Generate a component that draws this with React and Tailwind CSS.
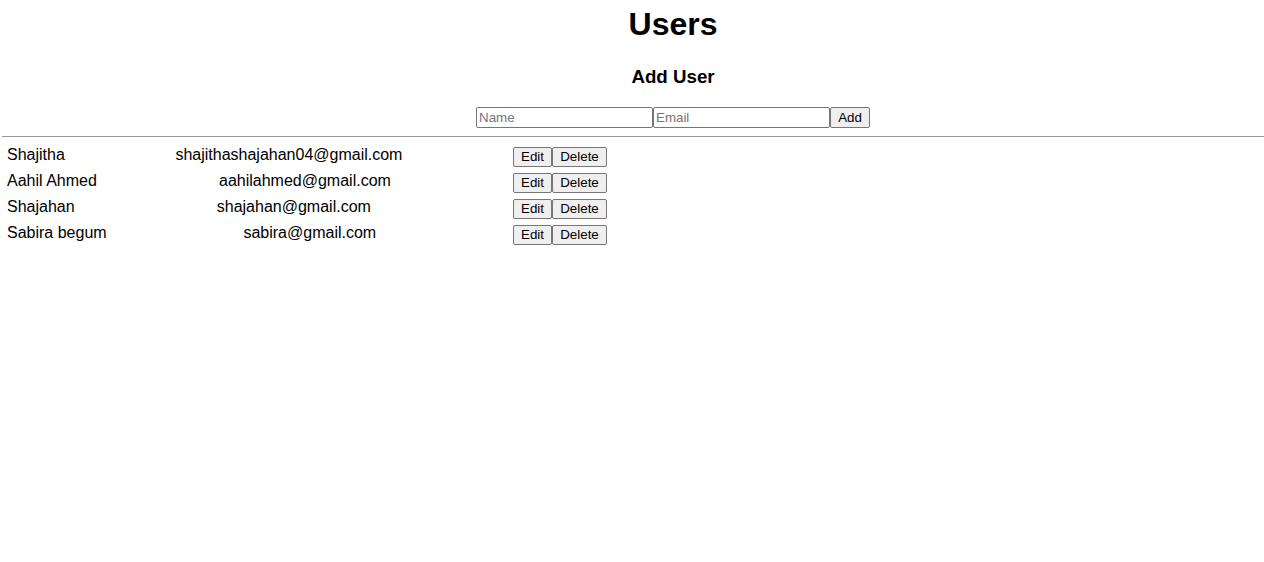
const users = [
  { name: "Shajitha", email: "shajithashajahan04@gmail.com" },
  { name: "Aahil Ahmed", email: "aahilahmed@gmail.com" },
  { name: "Shajahan", email: "shajahan@gmail.com" },
  { name: "Sabira begum", email: "sabira@gmail.com" },
];

const font = { fontFamily: '"Liberation Sans", Arial, sans-serif' };

function Btn({ children, className = "" }) {
  return (
    <button
      className={
        "h-[20px] rounded-[2px] border border-[#767676] bg-[#efefef] text-[13.33px] leading-[16px] text-black " +
        className
      }
    >
      {children}
    </button>
  );
}

export default function App() {
  return (
    <div className="min-h-[562px] bg-white text-black" style={font}>
      <div className="pl-[82px] text-center">
        <h1 className="pt-[6px] text-[32px] font-bold leading-[37px]">
          Users
        </h1>
        <h3 className="mt-[23px] text-[18.72px] font-bold leading-[22px]">
          Add User
        </h3>
        <div className="mt-[19px] flex justify-center">
          <input
            type="text"
            placeholder="Name"
            className="h-[21px] w-[177px] rounded-[2px] border border-[#767676] px-[2px] text-[13.33px] outline-none placeholder:text-[#757575]"
          />
          <input
            type="text"
            placeholder="Email"
            className="h-[21px] w-[177px] rounded-[2px] border border-[#767676] px-[2px] text-[13.33px] outline-none placeholder:text-[#757575]"
          />
          <Btn className="h-[21px] w-[40px]">Add</Btn>
        </div>
      </div>

      <hr className="ml-[2px] mt-[8px] border-t border-[#9a9a9a]" />

      <div className="mt-[9px] w-[600px] pl-[7px] box-content">
        {users.map((u) => (
          <div key={u.email} className="flex h-[26px] items-start">
            <span className="text-[16px] leading-[18px]">{u.name}</span>
            <span className="flex-1 text-center text-[16px] leading-[18px]">
              {u.email}
            </span>
            <div className="mt-[1px] flex">
              <Btn className="w-[39px]">Edit</Btn>
              <Btn className="w-[55px]">Delete</Btn>
            </div>
          </div>
        ))}
      </div>
    </div>
  );
}
